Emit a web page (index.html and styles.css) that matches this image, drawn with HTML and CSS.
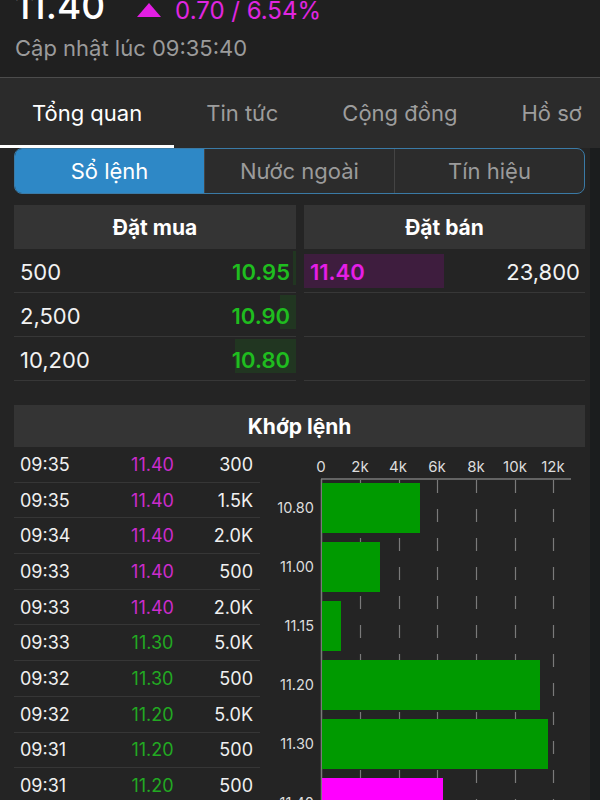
FILE: index.html
```html
<!DOCTYPE html>
<html lang="vi">
<head>
    <meta charset="utf-8">
    <title>Sổ lệnh</title>
    <link rel="stylesheet" href="styles.css">
</head>
<body>
    <header class="quote">
        <div class="price-line">
            <span class="last">11.40</span>
            <svg class="arrow" width="24" height="14" viewBox="0 0 24 14"><polygon points="12,0 24,14 0,14" fill="#e41ee4"/></svg>
            <span class="change">0.70 / 6.54%</span>
        </div>
        <div class="updated">Cập nhật lúc 09:35:40</div>
    </header>

    <nav class="tabs">
        <span class="tab active">Tổng quan</span>
        <span class="tab">Tin tức</span>
        <span class="tab">Cộng đồng</span>
        <span class="tab">Hồ sơ</span>
    </nav>

    <main class="panel">
        <div class="segment">
            <span class="seg active">Sổ lệnh</span>
            <span class="seg">Nước ngoài</span>
            <span class="seg">Tín hiệu</span>
        </div>

        <section class="book">
            <div class="side">
                <div class="side-head">Đặt mua</div>
                <div class="book-row bid" style="--bar: 3px"><span>500</span><span class="price up">10.95</span></div>
                <div class="book-row bid" style="--bar: 16px"><span>2,500</span><span class="price up">10.90</span></div>
                <div class="book-row bid" style="--bar: 61px"><span>10,200</span><span class="price up">10.80</span></div>
            </div>
            <div class="side">
                <div class="side-head">Đặt bán</div>
                <div class="book-row ask" style="--bar: 140px"><span class="price ceil">11.40</span><span>23,800</span></div>
                <div class="book-row ask"></div>
                <div class="book-row ask"></div>
            </div>
        </section>

        <section class="match">
            <div class="match-head">Khớp lệnh</div>
            <div class="match-body">
                <div class="trades">
                    <div class="trade"><span>09:35</span><span class="t-price ceil">11.40</span><span class="t-vol">300</span></div>
                    <div class="trade"><span>09:35</span><span class="t-price ceil">11.40</span><span class="t-vol">1.5K</span></div>
                    <div class="trade"><span>09:34</span><span class="t-price ceil">11.40</span><span class="t-vol">2.0K</span></div>
                    <div class="trade"><span>09:33</span><span class="t-price ceil">11.40</span><span class="t-vol">500</span></div>
                    <div class="trade"><span>09:33</span><span class="t-price ceil">11.40</span><span class="t-vol">2.0K</span></div>
                    <div class="trade"><span>09:33</span><span class="t-price up">11.30</span><span class="t-vol">5.0K</span></div>
                    <div class="trade"><span>09:32</span><span class="t-price up">11.30</span><span class="t-vol">500</span></div>
                    <div class="trade"><span>09:32</span><span class="t-price up">11.20</span><span class="t-vol">5.0K</span></div>
                    <div class="trade"><span>09:31</span><span class="t-price up">11.20</span><span class="t-vol">500</span></div>
                    <div class="trade"><span>09:31</span><span class="t-price up">11.20</span><span class="t-vol">500</span></div>
                </div>

                <svg class="chart" width="325" height="370" viewBox="0 0 325 370">
                    <g class="ticks" text-anchor="middle">
                        <text x="61" y="25">0</text>
                        <text x="100" y="25">2k</text>
                        <text x="138" y="25">4k</text>
                        <text x="177" y="25">6k</text>
                        <text x="216" y="25">8k</text>
                        <text x="255" y="25">10k</text>
                        <text x="293" y="25">12k</text>
                    </g>
                    <line class="axis" x1="61" y1="32" x2="311" y2="32"/>
                    <g class="grid">
                        <line x1="100.5" y1="33" x2="100.5" y2="370"/>
                        <line x1="139.5" y1="33" x2="139.5" y2="370"/>
                        <line x1="177.5" y1="33" x2="177.5" y2="370"/>
                        <line x1="216.5" y1="33" x2="216.5" y2="370"/>
                        <line x1="255.5" y1="33" x2="255.5" y2="370"/>
                        <line x1="293.5" y1="33" x2="293.5" y2="370"/>
                    </g>
                    <line class="axis" x1="61.5" y1="32" x2="61.5" y2="370"/>
                    <g class="bars">
                        <rect x="62" y="36" width="98" height="50" fill="#009a00"/>
                        <rect x="62" y="95" width="58" height="50" fill="#009a00"/>
                        <rect x="62" y="154" width="19" height="50" fill="#009a00"/>
                        <rect x="62" y="213" width="218" height="50" fill="#009a00"/>
                        <rect x="62" y="272" width="226" height="50" fill="#009a00"/>
                        <rect x="62" y="331" width="121" height="50" fill="#ff00ff"/>
                    </g>
                    <g class="levels" text-anchor="end">
                        <text x="54" y="66">10.80</text>
                        <text x="54" y="125">11.00</text>
                        <text x="54" y="184">11.15</text>
                        <text x="54" y="243">11.20</text>
                        <text x="54" y="302">11.30</text>
                        <text x="54" y="361">11.40</text>
                    </g>
                </svg>
            </div>
        </section>
    </main>
</body>
</html>
```

FILE: styles.css
```css
body {
    margin: 0;
    background-color: #1b1d1e;
    font-family: Inter, "Noto Sans", sans-serif;
    color: #f2f2f2;
}
.quote {
    height: 77px;
    overflow: hidden;
    padding: 0 15px;
    box-sizing: border-box;
    background-color: #202020;
}
.price-line {
    display: flex;
    align-items: center;
    height: 38px;
    margin-top: -14px;
}
.last {
    font-size: 37px;
    font-weight: 500;
    color: #ffffff;
}
.arrow {
    margin-left: 32px;
    margin-top: 10px;
}
.change {
    margin-left: 14px;
    margin-top: 10px;
    font-size: 24px;
    color: #e026e0;
}
.updated {
    margin-top: 11px;
    font-size: 22px;
    color: #9b9b9b;
}
.tabs {
    display: flex;
    height: 70px;
    overflow: hidden;
    white-space: nowrap;
    border-top: 1px solid #4c4c4c;
    background-color: #2b2b2b;
}
.tab {
    display: flex;
    align-items: center;
    padding: 2px 32px 0;
    font-size: 22px;
    color: #9d9d9d;
    border-bottom: 3px solid transparent;
}
.tab.active {
    color: #ffffff;
    border-bottom-color: #ffffff;
}
.panel {
    width: 590px;
    padding: 0 5px 0 14px;
    box-sizing: border-box;
    background-color: #242424;
    min-height: 660px;
}
.segment {
    display: flex;
    height: 46px;
    border: 1.5px solid #3a7aa6;
    border-radius: 8px;
    overflow: hidden;
    box-sizing: border-box;
    background-color: #2c2c2c;
}
.seg {
    flex: 1;
    display: flex;
    align-items: center;
    justify-content: center;
    font-size: 22px;
    color: #9b9b9b;
    border-left: 1px solid #444;
}
.seg:first-child {
    border-left: none;
}
.seg.active {
    background-color: #2e88c6;
    color: #ffffff;
}
.book {
    display: grid;
    grid-template-columns: 282px 281px;
    gap: 8px;
    margin-top: 11px;
}
.side-head {
    height: 44px;
    display: flex;
    align-items: center;
    justify-content: center;
    background-color: #343434;
    font-size: 21px;
    font-weight: 700;
    color: #ffffff;
}
.book-row {
    height: 44px;
    display: flex;
    align-items: center;
    justify-content: space-between;
    padding: 3px 6px 0;
    border-bottom: 1px solid #373737;
    box-sizing: border-box;
    font-size: 22px;
    background-repeat: no-repeat;
    background-size: var(--bar, 0) 34px;
}
.book-row.bid {
    background-image: linear-gradient(#213621, #213621);
    background-position: right 2px;
}
.book-row.ask {
    background-image: linear-gradient(#3e1d3e, #3e1d3e);
    background-position: left 5px;
    padding-right: 5px;
}
.price {
    font-weight: 600;
}
.up {
    color: #1fbd1f;
}
.ceil {
    color: #e61ee6;
}
.match {
    margin-top: 24px;
}
.match-head {
    height: 42px;
    display: flex;
    align-items: center;
    justify-content: center;
    background-color: #343434;
    font-size: 21px;
    font-weight: 700;
    color: #ffffff;
}
.match-body {
    display: grid;
    grid-template-columns: 246px 1fr;
}
.trade {
    display: grid;
    grid-template-columns: 90px 85px 1fr;
    align-items: center;
    height: 35.7px;
    padding: 0 7px 0 6px;
    box-sizing: border-box;
    border-bottom: 1px solid #363636;
    font-size: 18px;
    color: #f0f0f0;
}
.t-price {
    text-align: center;
}
.t-price.ceil {
    color: #cc2ccc;
}
.t-price.up {
    color: #22a922;
}
.t-vol {
    text-align: right;
}
.chart {
    display: block;
}
.chart text {
    font-family: Inter, "Noto Sans", sans-serif;
    font-size: 15px;
    fill: #dddddd;
}
.levels text {
    font-size: 14.5px;
}
.axis {
    stroke: #7a7a7a;
    stroke-width: 1.5;
}
.grid line {
    stroke: #7a7a7a;
    stroke-width: 1.2;
    stroke-dasharray: 13 16;
}
```
